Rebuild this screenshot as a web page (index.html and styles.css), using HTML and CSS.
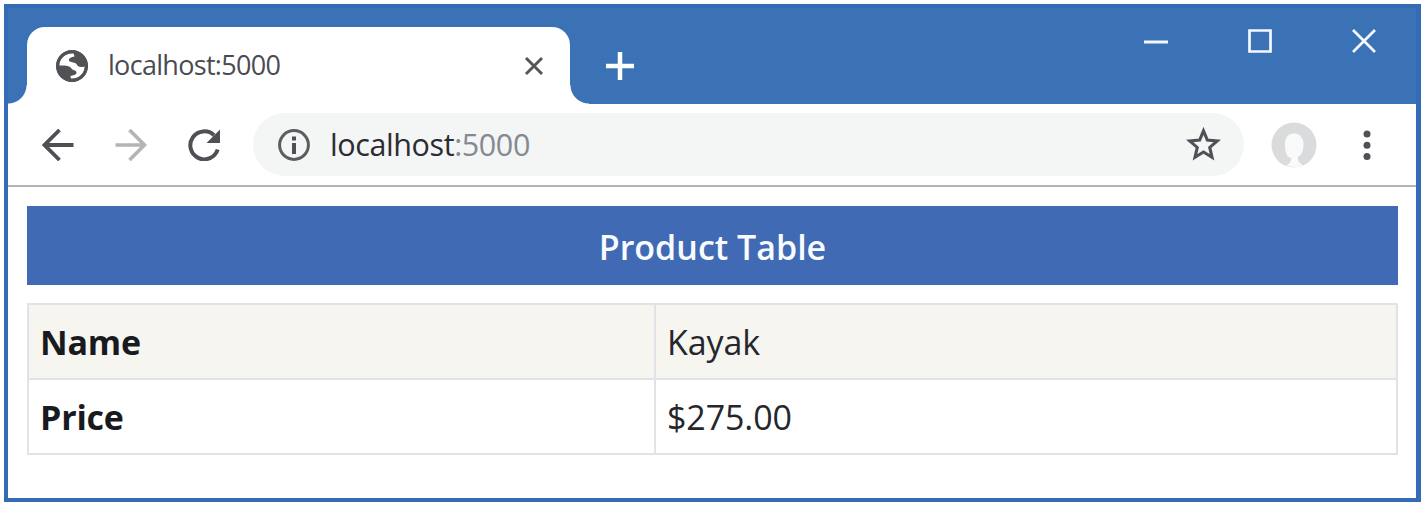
FILE: index.html
```html
<!DOCTYPE html>
<html lang="en">
<head>
<meta charset="utf-8">
<title>localhost:5000</title>
<link rel="stylesheet" href="styles.css">
</head>
<body>
<div class="window">
  <header class="titlebar">
    <div class="tab">
      <svg class="globe" viewBox="0 0 32 32"><circle cx="16" cy="16" r="16" fill="#505256"/><path d="M3.200 13.500C4.500 7.500 10 3 17.500 3.200L18.500 6.500C15 7 12.500 8.500 13 10.500C13.500 12.500 19 12 20.500 14C21.500 16.500 24 18 28.800 16.500C28.500 23 24 28.500 15 28.800L14.500 26C17 25.500 20.500 25 20.500 22.500C20.500 20 16.500 20.500 15.500 18.500C14 16 11 15.500 3.200 15.500Z" fill="#fff"/><circle cx="16" cy="16" r="14.300" fill="none" stroke="#505256" stroke-width="3"/></svg>
      <span class="tab-title">localhost:5000</span>
      <svg class="tab-close" viewBox="0 0 20 20"><path d="M2 2L18 18M18 2L2 18" stroke="#55565a" stroke-width="3"/></svg>
    </div>
    <svg class="new-tab" viewBox="0 0 28 28"><path d="M14 0V28M0 14H28" stroke="#fff" stroke-width="4.500"/></svg>
    <div class="controls">
      <svg viewBox="0 0 24 24"><path d="M0 13H24" stroke="#f4f9ff" stroke-width="3"/></svg>
      <svg viewBox="0 0 24 24"><path d="M1.500 1.500H22.500V22.500H1.500Z" fill="none" stroke="#f4f9ff" stroke-width="2.700"/></svg>
      <svg viewBox="0 0 24 24"><path d="M1 1L23 23M23 1L1 23" stroke="#f4f9ff" stroke-width="2.700"/></svg>
    </div>
  </header>
  <nav class="toolbar">
    <svg class="nav-icon" viewBox="0 0 32 32"><path d="M31.500 16H3M17.500 1L2.500 16L17.500 31" fill="none" stroke="#4f5055" stroke-width="3.800"/></svg>
    <svg class="nav-icon" viewBox="0 0 32 32"><path d="M.5 16H29M14.500 1L29.500 16L14.500 31" fill="none" stroke="#b4b4b4" stroke-width="3.600"/></svg>
    <svg class="nav-icon" viewBox="0 0 32 32"><path d="M29.700 20.500A14 14 0 1 1 26 6.200" fill="none" stroke="#4f5055" stroke-width="4"/><path d="M32 .5V14H18.500Z" fill="#4f5055"/></svg>
    <div class="address">
      <svg class="info" viewBox="0 0 32 32"><circle cx="16" cy="16" r="14.400" fill="none" stroke="#5c5d62" stroke-width="3"/><path d="M14 14H18V25H14ZM14 7.500H18V11.500H14Z" fill="#4f5055"/></svg>
      <span class="url">localhost<span class="port">:5000</span></span>
      <svg class="star" viewBox="0 0 32 32"><path d="M16 3.500L19.500 12L28.600 12.800L21.700 18.700L23.800 27.700L16 22.900L8.200 27.700L10.300 18.700L3.400 12.800L12.500 12Z" fill="none" stroke="#505156" stroke-width="2.800"/></svg>
    </div>
    <svg class="avatar" viewBox="0 0 46 46"><circle cx="23" cy="23" r="22.500" fill="#dadbdd"/><path d="M23 11.500C17 11.500 14 16 14 22C14 29 15 35 20 36C21 38 19 41 15.500 43.500Q24 47 32 43.500C28 41 26 38 27 35C31 33 32.500 28 32.500 22C32.500 16 29 11.500 23 11.500Z" fill="#fafafa"/></svg>
    <svg class="menu" viewBox="0 0 8 32"><circle cx="4" cy="5" r="3.500"/><circle cx="4" cy="16.200" r="3.500"/><circle cx="4" cy="27.400" r="3.500"/></svg>
  </nav>
  <main class="page">
    <h1 class="heading">Product Table</h1>
    <table class="product">
      <tr class="striped"><th>Name</th><td>Kayak</td></tr>
      <tr><th>Price</th><td>$275.00</td></tr>
    </table>
  </main>
</div>
</body>
</html>
```
FILE: styles.css
```css
* { box-sizing: border-box; }
body {
  margin: 0;
  padding: 4px 5px 5px 4px;
  height: 507px;
  overflow: hidden;
  background: #fff;
  font-family: "Open Sans", "Noto Sans", sans-serif;
  color: #25272c;
}
svg { display: block; flex: none; }
.window {
  height: 498px;
  border: 4px solid #356ab4;
  border-right-width: 5px;
  background: #fff;
}
.titlebar {
  height: 96px;
  padding-left: 19px;
  background: #3a72b5;
  display: flex;
}
.tab {
  position: relative;
  width: 543px;
  height: 77px;
  margin-top: 19px;
  padding: 0 26px 0 29px;
  border-radius: 18px 18px 0 0;
  background: #fff;
  display: flex;
  align-items: center;
}
/* Concave feet that join the tab to the toolbar */
.tab::before,
.tab::after {
  content: "";
  position: absolute;
  bottom: 0;
  width: 19px;
  height: 19px;
}
.tab::before {
  left: -19px;
  background: radial-gradient(circle at 0 0, transparent 18px, #fff 19px);
}
.tab::after {
  right: -19px;
  background: radial-gradient(circle at 100% 0, transparent 18px, #fff 19px);
}
.globe { width: 32px; height: 32px; }
.tab-title {
  margin-left: 20px;
  padding-bottom: 1px;
  font-size: 27px;
  line-height: 36px;
  letter-spacing: -0.7px;
  color: #4a4b52;
}
.tab-close { width: 20px; height: 20px; margin-left: auto; }
.new-tab { width: 28px; height: 28px; margin: 44px 0 0 36px; }
.controls {
  display: flex;
  gap: 80px;
  margin: 21px 40px 0 auto;
}
.controls svg { width: 24px; height: 24px; }
.toolbar {
  height: 83px;
  padding: 0 45px 0 34px;
  border-bottom: 2px solid #b3b3b3;
  display: flex;
  align-items: center;
}
.nav-icon { width: 32px; height: 32px; margin-right: 41px; }
.nav-icon + .nav-icon + .nav-icon { margin-right: 33px; }
.address {
  width: 991px;
  height: 63px;
  padding: 0 23px 0 25px;
  border-radius: 32px;
  background: #f4f5f5;
  display: flex;
  align-items: center;
}
.info { width: 32px; height: 32px; }
.url {
  margin-left: 20px;
  padding-bottom: 1px;
  font-size: 30.5px;
  line-height: 40px;
  letter-spacing: -0.4px;
  color: #2b2c31;
}
.port { color: #858a92; }
.star { width: 35px; height: 35px; margin-left: auto; }
.avatar { width: 46px; height: 46px; margin-left: 27px; }
.menu { width: 8px; height: 32px; margin-left: auto; fill: #505156; }
.page { padding: 19px 18px 0 19px; }
.heading {
  height: 79px;
  margin: 0 0 18px;
  background: #406ab3;
  color: #f8fbff;
  font-size: 34px;
  line-height: 83px;
  font-weight: 600;
  text-align: center;
}
.product {
  width: 1371px;
  table-layout: fixed;
  border-collapse: collapse;
  font-size: 34px;
  line-height: 48px;
}
.product th,
.product td {
  height: 75px;
  padding: 0 11px;
  border: 2px solid #e1e3e7;
  text-align: left;
}
.product td { letter-spacing: -0.1px; }
.product th { width: 627px; font-weight: 700; letter-spacing: -0.2px; color: #191a20; }
.striped { background: #f6f5f0; }
```
